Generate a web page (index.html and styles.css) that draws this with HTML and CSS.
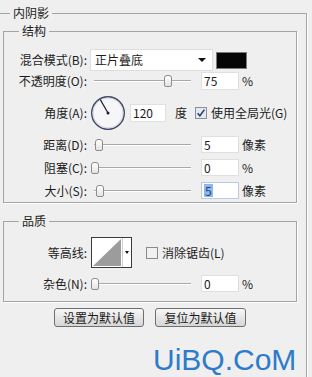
FILE: index.html
```html
<!DOCTYPE html>
<html lang="zh">
<head>
<meta charset="utf-8">
<title>内阴影</title>
<link rel="stylesheet" href="styles.css">
</head>
<body>
<fieldset class="group outer">
  <legend>内阴影</legend>
  <fieldset class="group inner">
    <legend>结构</legend>
    <div class="row row-blend">
      <span class="lbl">混合模式(B):</span>
      <div class="select"><span class="sel-text">正片叠底</span><span class="caret"></span></div>
      <div class="swatch"></div>
    </div>
    <div class="row row-opacity">
      <span class="lbl">不透明度(O):</span>
      <div class="slider"><div class="track"></div><div class="thumb" style="left:73px"></div></div>
      <div class="num">75</div><span class="unit">%</span>
    </div>
    <div class="row row-angle">
      <span class="lbl">角度(A):</span>
      <svg class="dial" width="36" height="36" viewBox="0 0 36 36">
        <circle cx="18" cy="18" r="16.3" fill="#f6f6f8" stroke="#3d4565" stroke-width="1.4"/>
        <circle cx="18" cy="18" r="15" fill="none" stroke="#c9ccd6" stroke-width="0.8"/>
        <line x1="18" y1="18" x2="10.3" y2="4.6" stroke="#1e2030" stroke-width="1.2"/>
        <circle cx="18" cy="18" r="1.5" fill="#1e2030"/>
      </svg>
      <div class="num num-angle">120</div>
      <span class="deg">度</span>
      <svg class="check" width="12" height="12" viewBox="0 0 12 12">
        <rect x="0.5" y="0.5" width="11" height="11" fill="#e4e8f0" stroke="#8a8f9c"/>
        <path d="M2.6 6.2 L4.9 8.8 L9.4 2.6" fill="none" stroke="#2b3a66" stroke-width="1.5"/>
      </svg>
      <span class="chk-label">使用全局光(G)</span>
    </div>
    <div class="row row-dist">
      <span class="lbl">距离(D):</span>
      <div class="slider"><div class="track"></div><div class="thumb" style="left:4px"></div></div>
      <div class="num">5</div><span class="unit">像素</span>
    </div>
    <div class="row row-choke">
      <span class="lbl">阻塞(C):</span>
      <div class="slider"><div class="track"></div><div class="thumb" style="left:0px"></div></div>
      <div class="num">0</div><span class="unit">%</span>
    </div>
    <div class="row row-size">
      <span class="lbl">大小(S):</span>
      <div class="slider"><div class="track"></div><div class="thumb" style="left:5px"></div></div>
      <div class="num num-focus"><span class="selected">5</span></div><span class="unit">像素</span>
    </div>
  </fieldset>
  <fieldset class="group inner quality">
    <legend>品质</legend>
    <div class="row row-contour">
      <span class="lbl">等高线:</span>
      <svg class="contour" width="41" height="31" viewBox="0 0 41 31">
        <rect x="0.5" y="0.5" width="40" height="30" fill="#ffffff" stroke="#3a3a3a"/>
        <polygon points="2,29 30,2 30,29" fill="#9c9c9c"/>
        <line x1="31.5" y1="1" x2="31.5" y2="30" stroke="#d0d0d0"/>
        <polygon points="34,14 38,14 36,17" fill="#111"/>
      </svg>
      <svg class="check check-aa" width="12" height="12" viewBox="0 0 12 12">
        <rect x="0.5" y="0.5" width="11" height="11" fill="#f1f1f1" stroke="#8a8a8a"/>
      </svg>
      <span class="chk-label">消除锯齿(L)</span>
    </div>
    <div class="row row-noise">
      <span class="lbl">杂色(N):</span>
      <div class="slider"><div class="track"></div><div class="thumb" style="left:0px"></div></div>
      <div class="num">0</div><span class="unit">%</span>
    </div>
  </fieldset>
  <div class="buttons">
    <button class="btn" type="button">设置为默认值</button>
    <button class="btn btn-reset" type="button">复位为默认值</button>
  </div>
</fieldset>
<div class="watermark">UiBQ.CoM</div>
</body>
</html>
```

FILE: styles.css
```css
* { box-sizing: border-box; }
html, body { margin: 0; padding: 0; }
body {
  width: 312px;
  height: 377px;
  overflow: hidden;
  position: relative;
  background: #efefef;
  color: #1c1c1c;
  font: 12px/16px "Noto Sans CJK SC", "Microsoft YaHei", sans-serif;
}

.group {
  margin: 0;
  padding: 0;
  min-width: 0;
  border: 1px solid #a4a4a4;
  box-shadow: 1px 1px 0 #ffffff;
}
.group > legend {
  padding: 0 3px;
  height: 16px;
  line-height: 16px;
}

.outer {
  margin: 5px 0 0 -1px;
  width: 308px;
  height: 372px;
  border-bottom: none;
}
.outer > legend { margin-left: 10px; }

.inner {
  margin: 2px 0 0 3px;
  width: 294px;
  padding-bottom: 3px;
}
.inner > legend { margin-left: 15px; }

.quality {
  margin-top: 10px;
  padding-bottom: 9px;
}

.row {
  display: flex;
  align-items: center;
}
.lbl {
  flex: none;
  width: 83px;
  text-align: right;
  white-space: nowrap;
}

.row-blend { height: 22px; margin-top: 10px; }
.row-opacity { height: 18px; margin-top: 1px; }
.row-angle { height: 36px; margin-top: 5px; }
.row-dist { height: 17px; margin-top: 5px; }
.row-choke { height: 17px; margin-top: 6px; }
.row-size { height: 17px; margin-top: 6px; }
.row-contour { height: 31px; margin-top: 8px; }
.row-noise { height: 17px; margin-top: 7px; }

.select {
  flex: none;
  margin-left: 3px;
  width: 123px;
  height: 22px;
  background: #ffffff;
  border: 1px solid #dedede;
  display: flex;
  align-items: center;
  justify-content: space-between;
  padding: 0 6px 0 4px;
}
.caret {
  width: 0;
  height: 0;
  border-left: 4px solid transparent;
  border-right: 4px solid transparent;
  border-top: 4px solid #111;
}
.swatch {
  flex: none;
  margin-left: 3px;
  width: 31px;
  height: 17px;
  background: #050505;
  border: 1px solid #7a7a7a;
}

.slider {
  flex: none;
  position: relative;
  margin-left: 4px;
  width: 100px;
  height: 12px;
}
.track {
  position: absolute;
  left: 3px;
  right: 0;
  top: 5px;
  height: 2px;
  border-top: 1px solid #a9a9a9;
  border-bottom: 1px solid #ffffff;
}
.thumb {
  position: absolute;
  top: 0;
  width: 8px;
  height: 12px;
  border: 1px solid #8c8c8c;
  border-radius: 3px 3px 2px 2px;
  background: linear-gradient(#ffffff, #e3e3e3);
}

.num {
  flex: none;
  margin-left: 10px;
  width: 38px;
  height: 18px;
  background: #ffffff;
  border: 1px solid #e0e0e0;
  padding-left: 2px;
  line-height: 16px;
}
.row-dist .num, .row-choke .num, .row-size .num, .row-noise .num { height: 17px; line-height: 15px; }
.num-focus { border-color: #b9cbe4; }
.selected {
  display: inline-block;
  background: #8fb8ea;
  color: #1b3f82;
  padding: 0 1px;
  line-height: 13px;
}
.unit {
  flex: none;
  margin-left: 3px;
}

.dial { flex: none; margin-left: 3px; }
.num-angle { margin-left: 4px; width: 36px; }
.deg { flex: none; margin-left: 9px; }
.check { flex: none; margin-left: 8px; }
.chk-label { flex: none; margin-left: 4px; white-space: nowrap; }

.contour { flex: none; margin-left: 4px; }
.check-aa { margin-left: 14px; }

.buttons {
  display: flex;
  gap: 11px;
  padding-left: 54px;
  margin-top: 6px;
}
.btn {
  width: 90px;
  height: 19px;
  padding: 0;
  font: 12px/17px "Noto Sans CJK SC", "Microsoft YaHei", sans-serif;
  color: #1a1a1a;
  border: 1px solid #6f6f6f;
  border-radius: 3px;
  background: linear-gradient(#f7f7f7, #e6e6e6 50%, #d6d6d6);
}
.btn-reset { width: 91px; }

.watermark {
  position: absolute;
  left: 153px;
  top: 345px;
  font: 30px/30px "Liberation Sans", Arial, sans-serif;
  color: #2d7bcb;
  white-space: nowrap;
}
```
